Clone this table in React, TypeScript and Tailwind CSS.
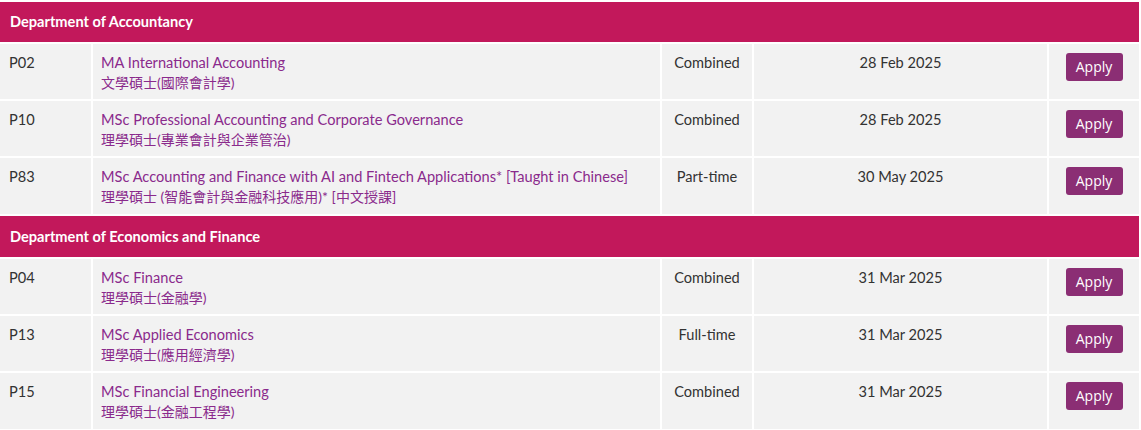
import * as React from "react";

type Programme = {
  code: string;
  en: string;
  zh: string;
  mode: string;
  deadline: string;
};

type Section = {
  dept: string;
  items: Programme[];
};

const sections: Section[] = [
  {
    dept: "Department of Accountancy",
    items: [
      { code: "P02", en: "MA International Accounting", zh: "文學碩士(國際會計學)", mode: "Combined", deadline: "28 Feb 2025" },
      { code: "P10", en: "MSc Professional Accounting and Corporate Governance", zh: "理學碩士(專業會計與企業管治)", mode: "Combined", deadline: "28 Feb 2025" },
      { code: "P83", en: "MSc Accounting and Finance with AI and Fintech Applications* [Taught in Chinese]", zh: "理學碩士 (智能會計與金融科技應用)* [中文授課]", mode: "Part-time", deadline: "30 May 2025" },
    ],
  },
  {
    dept: "Department of Economics and Finance",
    items: [
      { code: "P04", en: "MSc Finance", zh: "理學碩士(金融學)", mode: "Combined", deadline: "31 Mar 2025" },
      { code: "P13", en: "MSc Applied Economics", zh: "理學碩士(應用經濟學)", mode: "Full-time", deadline: "31 Mar 2025" },
      { code: "P15", en: "MSc Financial Engineering", zh: "理學碩士(金融工程學)", mode: "Combined", deadline: "31 Mar 2025" },
    ],
  },
];

const cell = "bg-[#f2f2f2] pt-[9px] leading-5";

function ProgrammeRow({ p, last }: { p: Programme; last: boolean }) {
  return (
    <div
      className={[
        "grid grid-cols-[91px_567px_90px_293px_90px] gap-x-[2px]",
        last ? "h-[56px]" : "h-[55px]",
      ].join(" ")}
    >
      <div className={`${cell} pl-[9px] text-[#333]`}>{p.code}</div>
      <div className={`${cell} pl-[8px] text-[#8a2a8c]`}>
        <div>{p.en}</div>
        <div className="text-[14px]">{p.zh}</div>
      </div>
      <div className={`${cell} text-center text-[#333]`}>{p.mode}</div>
      <div className={`${cell} text-center text-[#333]`}>{p.deadline}</div>
      <div className={`${cell} flex justify-center`}>
        <button
          type="button"
          className="h-7 w-[57px] rounded-[3px] bg-[#8b2e74] text-white text-sm font-['Open_Sans',sans-serif]"
        >
          Apply
        </button>
      </div>
    </div>
  );
}

export default function App() {
  return (
    <div className="w-[1141px] h-[430px] overflow-hidden bg-white pt-[2px] text-[14.6px] font-['Lato','Noto_Sans_CJK_TC',sans-serif]">
      <div className="flex flex-col gap-y-[2px] w-[1139px]">
        {sections.map((s, si) => (
          <React.Fragment key={s.dept}>
            <div
              className={[
                "bg-[#c2185b] flex items-center pl-[10px] text-white font-bold",
                si === 0 ? "h-10" : "h-[41px]",
              ].join(" ")}
            >
              {s.dept}
            </div>
            {s.items.map((p, i) => (
              <ProgrammeRow key={p.code} p={p} last={i === s.items.length - 1} />
            ))}
          </React.Fragment>
        ))}
      </div>
    </div>
  );
}
